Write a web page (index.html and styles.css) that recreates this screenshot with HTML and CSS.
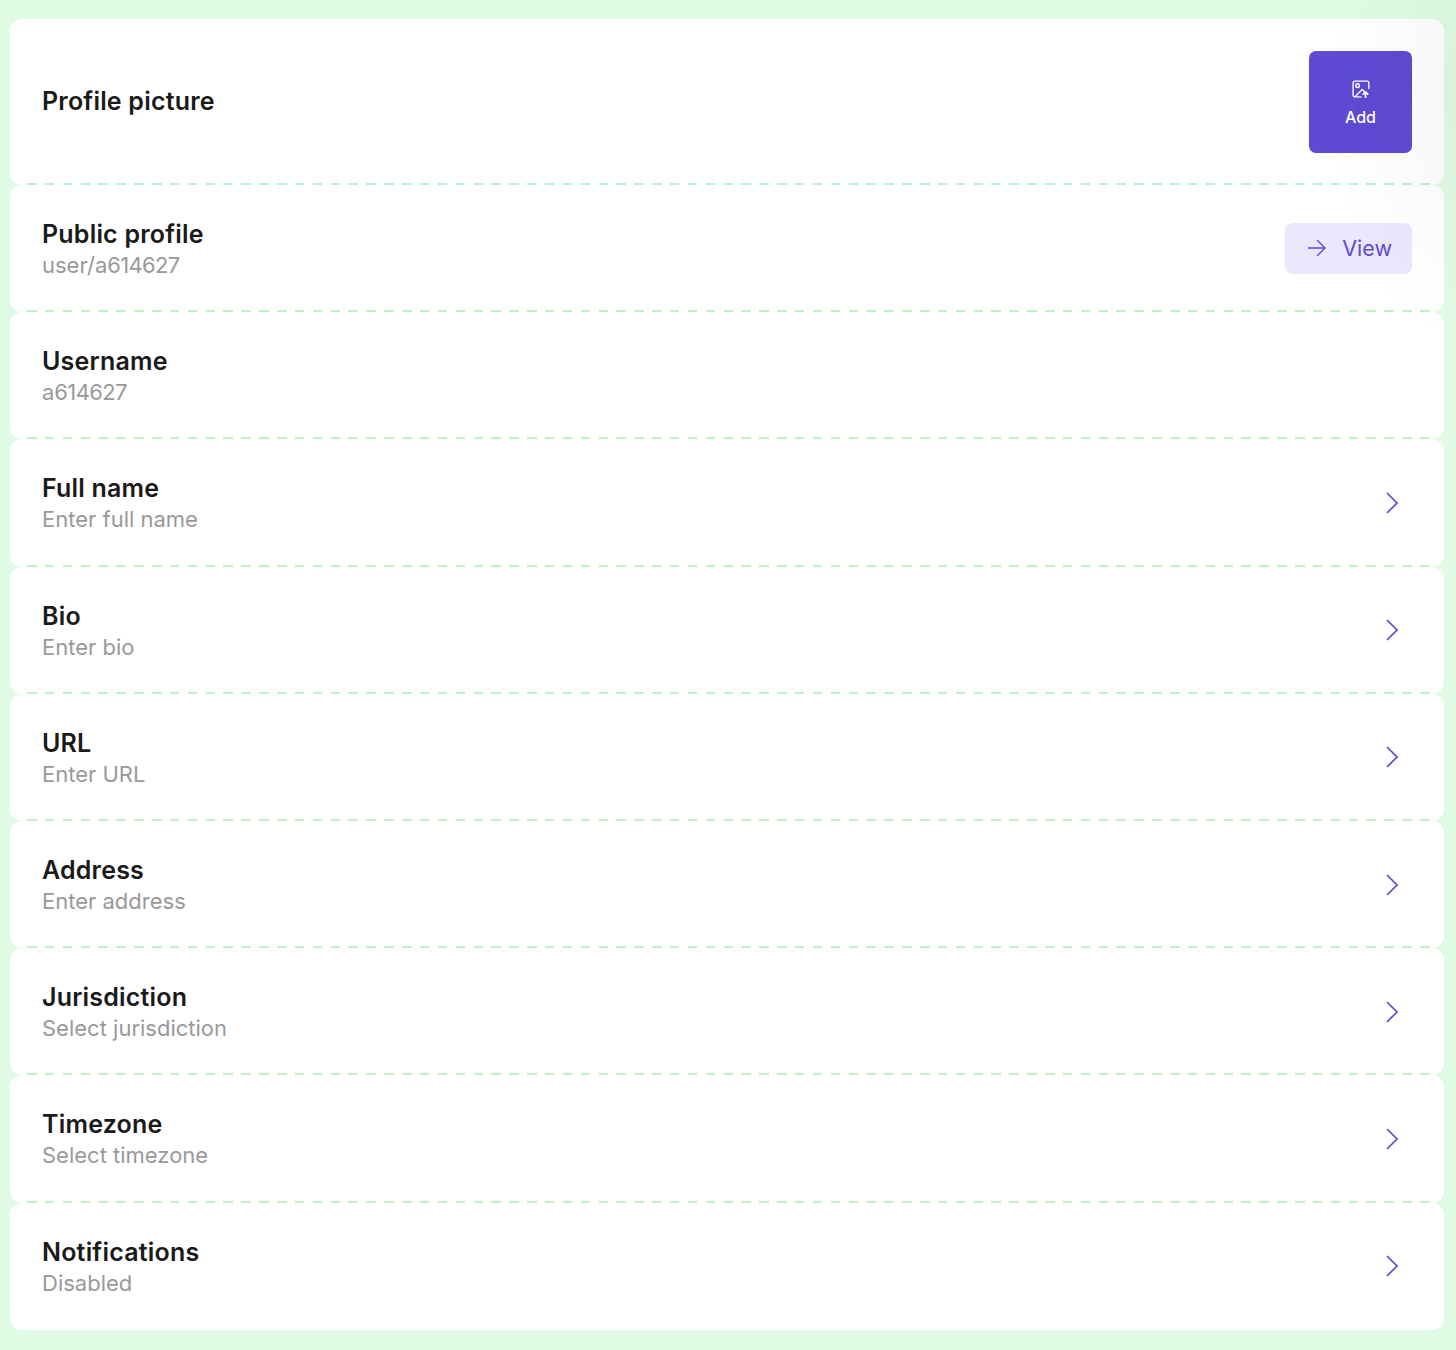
FILE: index.html
```html
<!DOCTYPE html>
<html lang="en">
<head>
<meta charset="utf-8">
<title>Profile settings</title>
<link rel="stylesheet" href="styles.css">
</head>
<body>
<main class="list">
  <section class="row row-first">
    <div class="text"><h2 class="title">Profile picture</h2></div>
    <button class="btn-add" type="button">
      <svg class="icon-add" viewBox="0 0 16 16" width="18" height="18" fill="none" stroke="currentColor" stroke-width="1.25" stroke-linecap="round" stroke-linejoin="round"><path d="M15 7.5V2.5A1.5 1.5 0 0 0 13.5 1h-11A1.5 1.5 0 0 0 1 2.5v11A1.5 1.5 0 0 0 2.5 15H8"/><circle cx="5" cy="5" r="1.6"/><path d="M2.5 15 9 8.5l1.8 1.6"/><path stroke-width="1.5" d="M12 15.5v-5M10 12.5l2-2 2 2"/></svg>
      <span>Add</span>
    </button>
  </section>
  <section class="row">
    <div class="text"><h2 class="title">Public profile</h2><p class="sub">user/a<span class="num">614627</span></p></div>
    <button class="btn-view" type="button">
      <svg viewBox="0 0 18 18" width="18" height="18" fill="none" stroke="currentColor" stroke-width="1.4"><path d="M0 9h17M9 1l8 8-8 8"/></svg>
      <span>View</span>
    </button>
  </section>
  <section class="row">
    <div class="text"><h2 class="title">Username</h2><p class="sub">a<span class="num">614627</span></p></div>
  </section>
  <section class="row">
    <div class="text"><h2 class="title">Full name</h2><p class="sub">Enter full name</p></div>
    <svg class="chev" viewBox="0 0 12 22" width="12" height="22" fill="none" stroke="currentColor" stroke-width="1.7"><path d="M1 1l10 10L1 21"/></svg>
  </section>
  <section class="row">
    <div class="text"><h2 class="title">Bio</h2><p class="sub">Enter bio</p></div>
    <svg class="chev" viewBox="0 0 12 22" width="12" height="22" fill="none" stroke="currentColor" stroke-width="1.7"><path d="M1 1l10 10L1 21"/></svg>
  </section>
  <section class="row">
    <div class="text"><h2 class="title">URL</h2><p class="sub">Enter URL</p></div>
    <svg class="chev" viewBox="0 0 12 22" width="12" height="22" fill="none" stroke="currentColor" stroke-width="1.7"><path d="M1 1l10 10L1 21"/></svg>
  </section>
  <section class="row">
    <div class="text"><h2 class="title">Address</h2><p class="sub">Enter address</p></div>
    <svg class="chev" viewBox="0 0 12 22" width="12" height="22" fill="none" stroke="currentColor" stroke-width="1.7"><path d="M1 1l10 10L1 21"/></svg>
  </section>
  <section class="row">
    <div class="text"><h2 class="title">Jurisdiction</h2><p class="sub">Select jurisdiction</p></div>
    <svg class="chev" viewBox="0 0 12 22" width="12" height="22" fill="none" stroke="currentColor" stroke-width="1.7"><path d="M1 1l10 10L1 21"/></svg>
  </section>
  <section class="row">
    <div class="text"><h2 class="title">Timezone</h2><p class="sub">Select timezone</p></div>
    <svg class="chev" viewBox="0 0 12 22" width="12" height="22" fill="none" stroke="currentColor" stroke-width="1.7"><path d="M1 1l10 10L1 21"/></svg>
  </section>
  <section class="row">
    <div class="text"><h2 class="title">Notifications</h2><p class="sub">Disabled</p></div>
    <svg class="chev" viewBox="0 0 12 22" width="12" height="22" fill="none" stroke="currentColor" stroke-width="1.7"><path d="M1 1l10 10L1 21"/></svg>
  </section>
</main>
</body>
</html>
```
FILE: styles.css
```css
* { box-sizing: border-box; }
html, body { margin: 0; height: 1350px; overflow: hidden; }
body {
  position: relative;
  background: #dffbe3;
  font-family: Inter, "Liberation Sans", sans-serif;
  color: #1a1a1a;
}
body::after {
  content: "";
  position: absolute;
  top: 0;
  right: 0;
  width: 200px;
  height: 330px;
  pointer-events: none;
  background: radial-gradient(ellipse 130px 260px at 100% 90px, rgba(0, 0, 0, 0.03), rgba(0, 0, 0, 0));
}
.list {
  display: flex;
  flex-direction: column;
  padding: 19px 12px 20px 10px;
}
.row {
  position: relative;
  display: flex;
  align-items: center;
  justify-content: space-between;
  height: 127.2px;
  padding: 0 32px;
  background: #fff;
  border-radius: 12px;
}
.row + .row::before {
  content: "";
  position: absolute;
  top: -2px;
  left: 17px;
  right: 14px;
  height: 2px;
  background: repeating-linear-gradient(90deg, #bff2c9 0 9.5px, transparent 9.5px 17.86px);
}
.row-first { height: 166px; }
.text { display: flex; flex-direction: column; padding-top: 3px; }
.row-first .text { padding: 0 0 2px; }
.title {
  margin: 0;
  font-size: 25px;
  line-height: 31px;
  font-weight: 600;
  letter-spacing: 0.2px;
  color: #1a1a1a;
}
.sub {
  margin: 0;
  font-size: 22px;
  line-height: 31px;
  font-weight: 400;
  color: #999;
}
.num { letter-spacing: -0.66px; }
.btn-add {
  display: flex;
  flex-direction: column;
  align-items: center;
  justify-content: center;
  gap: 10px;
  width: 103px;
  height: 102px;
  padding: 1px 0 0;
  border: 0;
  border-radius: 7px;
  background: #5e4ad3;
  color: #fff;
  font: 500 16px/18px Inter, "Liberation Sans", sans-serif;
}
.btn-view {
  display: flex;
  align-items: center;
  gap: 16px;
  height: 51px;
  padding: 0 20px 1px 23px;
  border: 0;
  border-radius: 8px;
  background: #ebe7fd;
  color: #5e4ad3;
  font: 400 21.5px/26px Inter, "Liberation Sans", sans-serif;
}
.chev { margin-right: 14px; color: #5e4ad3; }
```
